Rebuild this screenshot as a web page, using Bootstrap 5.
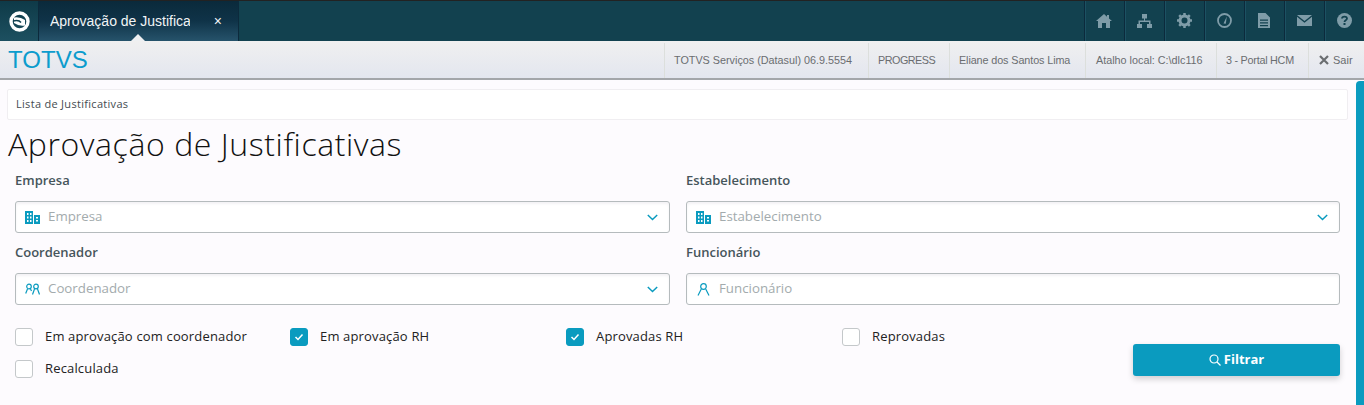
<!DOCTYPE html>
<html lang="pt-BR">
<head>
<meta charset="utf-8">
<title>Aprovação de Justificativas</title>
<link rel="stylesheet" href="https://cdn.jsdelivr.net/npm/bootstrap@5.3.0/dist/css/bootstrap.min.css">
<style>
html,body{height:405px;overflow:hidden}
body{background:#fdfbfe;font-family:"Open Sans","Liberation Sans",sans-serif;color:#1c1c1c}
.topstrip{height:41px;background:#12414f;border-top:1px solid #222;box-sizing:border-box}
.logo-cell{width:39px;background:linear-gradient(#0e3a48,#1d5060);border-right:1px solid #0c2a3c}
.tab-cell{width:200px;padding-left:11px;padding-right:16px;background:linear-gradient(#0a2a3b 0,#0f3348 50%,#26536b 100%);border-right:1px solid #0c2a3c;color:#f2f5f6;font:14px "Liberation Sans",sans-serif;position:relative}
.tab-name{width:140px;overflow:hidden;white-space:nowrap}
.tab-close{font-size:14px;margin-left:auto;line-height:1}
.tab-arrow{position:absolute;left:92px;bottom:0;width:0;height:0;border:7px solid transparent;border-top:0;border-bottom-color:#eef0f2}
.tool-cell{width:40px;padding:0 1px 1px 0;border-left:1px solid #0c2a3c;box-shadow:inset 1px 0 0 #1c5162}
.infobar{height:39px;background:linear-gradient(#f0f0f0,#e3e6ef);border-bottom:2px solid #a3a6aa;box-sizing:border-box;padding-top:1px}
.brand-text{font:24px/1 "Liberation Sans",sans-serif;color:#0c9ccd;padding-left:8px;letter-spacing:.05px}
.info-cell{font:10.8px "Liberation Sans",sans-serif;color:#6a6d70;padding:0 0 0 9px;border-left:1px solid #dcdfdc;height:35px;white-space:nowrap}
.w-version{width:204px}
.w-engine{width:81px;letter-spacing:-.5px}
.w-person{width:136px;letter-spacing:-.1px}
.w-path{width:131px;padding-left:10px}
.w-portal{width:92px;letter-spacing:-.25px}
.exit-cell{padding:0 0 0 10px;width:56px;font-size:11px}
.pagearea{padding:9px 7px 0;position:relative;height:325px}
.scroll-thumb{position:absolute;left:1356px;top:1px;width:8px;height:330px;background:#0a9bbf;border-radius:4px 0 0 0}
.crumb{width:1341px;height:31px;background:#fff;border:1px solid #f0eef1;border-radius:2px;font-size:11px;color:#444b4f;padding-left:8px;letter-spacing:.3px}
.page-title{font:300 32px/1 "Open Sans",sans-serif;color:#111;margin:8px 0 0 1px;height:33px;letter-spacing:.58px}
.formgrid{display:grid;grid-template-columns:655px 654px;column-gap:16px;padding-left:8px;width:1333px}
.fieldlabel{font-size:13px;font-weight:600;color:#46555b;height:30px;line-height:18px;margin:10px 0 0;display:block}
.fieldbox{height:32px;background:#fff;border:1px solid #b5bbbd;border-radius:3px;padding:0 11px 0 9px;box-shadow:inset 0 2px 3px #f3f2f5;gap:8px;font-size:13.3px;color:#a3abad}
.fieldbox .chev{margin-left:auto}
.checks{display:grid;grid-template-columns:275px 276px 276px 276px;padding-left:8px;row-gap:14px;margin-top:23px;width:1103px}
.checkitem{height:18px;gap:12px;font-size:13px;letter-spacing:.16px;color:#222;white-space:nowrap}
.tick{width:18px;height:18px;border:1px solid #c4c8ca;border-radius:3px;background:#fff;flex:none}
.tick.on{background:#0a9bbf;border-color:#0a9bbf}
.filter-btn{position:absolute;left:1133px;top:264px;width:207px;height:32px;background:#0a9bbf;color:#fff;border:0;border-radius:3px;font-size:13px;font-weight:700;box-shadow:0 3px 6px rgba(0,0,0,.18);gap:3px}
</style>
</head>
<body>
<header class="topstrip d-flex align-items-stretch">
  <div class="logo-cell d-flex align-items-center justify-content-center">
    <svg width="21" height="21" viewBox="0 0 21 21"><circle cx="10.5" cy="10.5" r="8.500" fill="none" stroke="#fff" stroke-width="3.400"/><path d="M5 6.500 Q11 5.500 16 9 L16 14.500 Q10 15.500 5 12z" fill="#fff"/><path d="M4 10 Q10 8.500 12 11.500" fill="none" stroke="#12414f" stroke-width="1.400"/></svg>
  </div>
  <div class="tab-cell d-flex align-items-center">
    <span class="tab-name">Aprovação de Justifica</span>
    <span class="tab-close">×</span>
    <span class="tab-arrow"></span>
  </div>
  <nav class="d-flex ms-auto">
    <div class="tool-cell d-flex align-items-center justify-content-center">
      <svg width="16" height="14" viewBox="0 0 16 14" fill="#7f9ca8"><path d="M8 0 0 7h2v7h4V9h4v5h4V7h2l-3-2.600V1h-2v1.700z"/></svg>
    </div>
    <div class="tool-cell d-flex align-items-center justify-content-center">
      <svg width="15" height="14" viewBox="0 0 15 14" fill="#7f9ca8"><path d="M5 0h5v4.500H8V6.500h5.500V10H15v4h-5v-4h2V8H3v2h2v4H0v-4h1.500V6.500H7v-2H5z"/></svg>
    </div>
    <div class="tool-cell d-flex align-items-center justify-content-center">
      <svg width="15" height="15" viewBox="0 0 15 15"><circle cx="7.500" cy="7.500" r="4.500" fill="none" stroke="#7f9ca8" stroke-width="3"/><path d="M7.500 0v15M0 7.500h15M2.200 2.200l10.600 10.600M12.800 2.200 2.200 12.800" stroke="#7f9ca8" stroke-width="2.500" stroke-dasharray="2.500 10 2.500"/></svg>
    </div>
    <div class="tool-cell d-flex align-items-center justify-content-center">
      <svg width="15" height="15" viewBox="0 0 15 15" fill="none" stroke="#7f9ca8"><circle cx="7.500" cy="7.500" r="6.500" stroke-width="1.800"/><path d="M6.500 10.500 9.800 3.500 8.800 10.800z" fill="#7f9ca8" stroke="none"/></svg>
    </div>
    <div class="tool-cell d-flex align-items-center justify-content-center">
      <svg width="12" height="15" viewBox="0 0 12 15" fill="#7f9ca8"><path d="M0 0h7.500L12 4.500V15H0zM2 6.500v1.300h8V6.500zm0 2.800v1.300h8V9.300zm0 2.700v1.300h8V12z" fill-rule="evenodd"/></svg>
    </div>
    <div class="tool-cell d-flex align-items-center justify-content-center">
      <svg width="15" height="11" viewBox="0 0 15 11" fill="#7f9ca8"><path d="M0 0h15L7.500 6zM0 1.800l7.500 6 7.500-6V11H0z"/></svg>
    </div>
    <div class="tool-cell d-flex align-items-center justify-content-center">
      <svg width="15" height="15" viewBox="0 0 15 15"><circle cx="7.500" cy="7.500" r="7.500" fill="#7f9ca8"/><path d="M5 5.600C5 2.900 10 2.900 10 5.600 10 7.400 7.500 7.300 7.500 9" fill="none" stroke="#12414f" stroke-width="1.800"/><rect x="6.500" y="10" width="2" height="2" fill="#12414f"/></svg>
    </div>
  </nav>
</header>
<div class="infobar d-flex align-items-center">
  <div class="brand-text">TOTVS</div>
  <div class="d-flex align-items-center ms-auto">
    <div class="info-cell w-version d-flex align-items-center">TOTVS Serviços (Datasul) 06.9.5554</div>
    <div class="info-cell w-engine d-flex align-items-center">PROGRESS</div>
    <div class="info-cell w-person d-flex align-items-center">Eliane dos Santos Lima</div>
    <div class="info-cell w-path d-flex align-items-center">Atalho local: C:\dlc116</div>
    <div class="info-cell w-portal d-flex align-items-center">3 - Portal HCM</div>
    <div class="info-cell exit-cell d-flex align-items-center gap-1">
      <svg width="10" height="10" viewBox="0 0 10 10" stroke="#6a6d70" stroke-width="2.200"><path d="M1 1l8 8M9 1 1 9"/></svg>Sair
    </div>
  </div>
</div>
<main class="pagearea">
  <div class="scroll-thumb"></div>
  <div class="crumb d-flex align-items-center">Lista de Justificativas</div>
  <h1 class="page-title">Aprovação de Justificativas</h1>
  <div class="formgrid">
    <div>
      <label class="fieldlabel">Empresa</label>
      <div class="fieldbox d-flex align-items-center">
        <svg width="15" height="13" viewBox="0 0 15 13" fill="#0a9bbf"><path d="M0 0h8v13H0zM2 2v2h1.500V2zm3 0v2h1.500V2zM2 5.500v2h1.500v-2zm3 0v2h1.500v-2zM2 9v2h1.500V9zm3 0v2h1.500V9zM9 4h6v9H9zm2 2v1.500h2V6zm0 3v1.500h2V9z" fill-rule="evenodd"/></svg>
        <span>Empresa</span>
        <svg class="chev" width="11" height="7" viewBox="0 0 11 7" fill="none" stroke="#0a9bbf" stroke-width="1.500"><path d="M.8 1l4.700 4.500L10.200 1"/></svg>
      </div>
    </div>
    <div>
      <label class="fieldlabel">Estabelecimento</label>
      <div class="fieldbox d-flex align-items-center">
        <svg width="15" height="13" viewBox="0 0 15 13" fill="#0a9bbf"><path d="M0 0h8v13H0zM2 2v2h1.500V2zm3 0v2h1.500V2zM2 5.500v2h1.500v-2zm3 0v2h1.500v-2zM2 9v2h1.500V9zm3 0v2h1.500V9zM9 4h6v9H9zm2 2v1.500h2V6zm0 3v1.500h2V9z" fill-rule="evenodd"/></svg>
        <span>Estabelecimento</span>
        <svg class="chev" width="11" height="7" viewBox="0 0 11 7" fill="none" stroke="#0a9bbf" stroke-width="1.500"><path d="M.8 1l4.700 4.500L10.200 1"/></svg>
      </div>
    </div>
    <div>
      <label class="fieldlabel">Coordenador</label>
      <div class="fieldbox d-flex align-items-center">
        <svg width="15" height="13" viewBox="0 0 15 13" fill="none" stroke="#0a9bbf" stroke-width="1.200"><circle cx="4" cy="3.500" r="2.300"/><circle cx="11" cy="3.500" r="2.300"/><path d="M.7 10.500 2.500 6M5.500 6l1 2M7.500 11.500 9.500 6M12.500 6l2 5.500"/></svg>
        <span>Coordenador</span>
        <svg class="chev" width="11" height="7" viewBox="0 0 11 7" fill="none" stroke="#0a9bbf" stroke-width="1.500"><path d="M.8 1l4.700 4.500L10.200 1"/></svg>
      </div>
    </div>
    <div>
      <label class="fieldlabel">Funcionário</label>
      <div class="fieldbox d-flex align-items-center">
        <svg width="15" height="13" viewBox="0 0 15 13" fill="none" stroke="#0a9bbf" stroke-width="1.200"><circle cx="7.500" cy="3.500" r="2.800"/><path d="M2 12.500 5.300 6M9.700 6 13 12.500"/></svg>
        <span>Funcionário</span>
      </div>
    </div>
  </div>
  <div class="checks">
    <div class="checkitem d-flex align-items-center"><span class="tick"></span>Em aprovação com coordenador</div>
    <div class="checkitem d-flex align-items-center"><span class="tick on d-flex align-items-center justify-content-center"><svg width="10" height="8" viewBox="0 0 10 8" fill="none" stroke="#fff" stroke-width="1.500"><path d="M1.500 4 4 6.500 8.500 1.500"/></svg></span>Em aprovação RH</div>
    <div class="checkitem d-flex align-items-center"><span class="tick on d-flex align-items-center justify-content-center"><svg width="10" height="8" viewBox="0 0 10 8" fill="none" stroke="#fff" stroke-width="1.500"><path d="M1.500 4 4 6.500 8.500 1.500"/></svg></span>Aprovadas RH</div>
    <div class="checkitem d-flex align-items-center"><span class="tick"></span>Reprovadas</div>
    <div class="checkitem d-flex align-items-center"><span class="tick"></span>Recalculada</div>
  </div>
  <button class="btn filter-btn d-flex align-items-center justify-content-center" type="button">
    <svg width="12" height="12" viewBox="0 0 12 12" fill="none" stroke="#fff" stroke-width="1.200"><circle cx="5" cy="5" r="4"/><path d="M8 8l3.500 3.500"/></svg>Filtrar
  </button>
</main>
</body>
</html>
